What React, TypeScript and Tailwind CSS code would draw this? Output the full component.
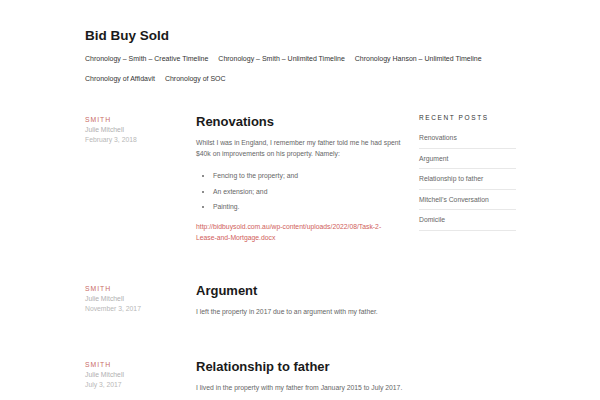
const nav1 = [
  'Chronology – Smith – Creative Timeline',
  'Chronology – Smith – Unlimited Timeline',
  'Chronology Hanson – Unlimited Timeline',
];
const nav2 = ['Chronology of Affidavit', 'Chronology of SOC'];
const recent = ['Renovations', 'Argument', 'Relationship to father', 'Mitchell’s Conversation', 'Domicile'];

const Meta = ({ date }: { date: string }) => (
  <div className="w-[111px] shrink-0 pt-[1px] text-[6.8px] leading-[10px]">
    <div className="tracking-[1px] text-[#c96b66]">SMITH</div>
    <div className="text-[#b0b0b0]">Julie Mitchell</div>
    <div className="text-[#b8b8b8]">{date}</div>
  </div>
);

export default function App() {
  return (
    <div className="min-h-[400px] w-[600px] bg-white text-[#666] overflow-hidden" style={{ fontFamily: '"Liberation Sans", Arial, sans-serif' }}>
      <div className="px-[85px] pt-[28px]">
        <h1 className="text-[13.5px] font-bold leading-[16px] text-[#1a1a1a]">Bid Buy Sold</h1>
        <nav className="mt-[5px] text-[7px] leading-[20px] text-[#333]">
          <div className="flex gap-[10px]">
            {nav1.map((n) => (
              <span key={n}>{n}</span>
            ))}
          </div>
          <div className="flex gap-[10px]">
            {nav2.map((n) => (
              <span key={n}>{n}</span>
            ))}
          </div>
        </nav>
        <div className="mt-[25px] flex">
          <main className="w-[334px] shrink-0">
            <article className="flex">
              <Meta date="February 3, 2018" />
              <div className="w-[215px]">
                <h2 className="text-[13px] font-bold leading-[16px] text-[#1a1a1a]">Renovations</h2>
                <p className="mt-[7px] text-[6.8px] leading-[11px]">
                  Whilst I was in England, I remember my father told me he had spent $40k on improvements on his property. Namely:
                </p>
                <ul className="mt-[9px] list-disc pl-[17px] text-[6.8px] leading-[15.5px]">
                  <li>Fencing to the property; and</li>
                  <li>An extension; and</li>
                  <li>Painting.</li>
                </ul>
                <p className="mt-[6px] w-[200px] break-words text-[6.8px] leading-[11px] text-[#d0605a]">
                  http://bidbuysold.com.au/wp-content/uploads/2022/08/Task-2-Lease-and-Mortgage.docx
                </p>
              </div>
            </article>
            <article className="mt-[40px] flex">
              <Meta date="November 3, 2017" />
              <div className="w-[215px]">
                <h2 className="text-[13px] font-bold leading-[16px] text-[#1a1a1a]">Argument</h2>
                <p className="mt-[7px] text-[6.8px] leading-[11px]">I left the property in 2017 due to an argument with my father.</p>
              </div>
            </article>
            <article className="mt-[42px] flex">
              <Meta date="July 3, 2017" />
              <div className="w-[215px]">
                <h2 className="text-[13px] font-bold leading-[16px] text-[#1a1a1a]">Relationship to father</h2>
                <p className="mt-[7px] text-[6.8px] leading-[11px] whitespace-nowrap">I lived in the property with my father from January 2015 to July 2017.</p>
              </div>
            </article>
          </main>
          <aside className="w-[97px] shrink-0 -mt-[1px]">
            <h3 className="text-[6.5px] tracking-[1.6px] leading-[10px] text-[#333]">RECENT POSTS</h3>
            <ul className="mt-[5px] text-[6.8px] text-[#666]">
              {recent.map((r) => (
                <li key={r} className="border-b border-[#e8e8e8] py-[5px] leading-[9.5px]">
                  {r}
                </li>
              ))}
            </ul>
          </aside>
        </div>
      </div>
    </div>
  );
}
